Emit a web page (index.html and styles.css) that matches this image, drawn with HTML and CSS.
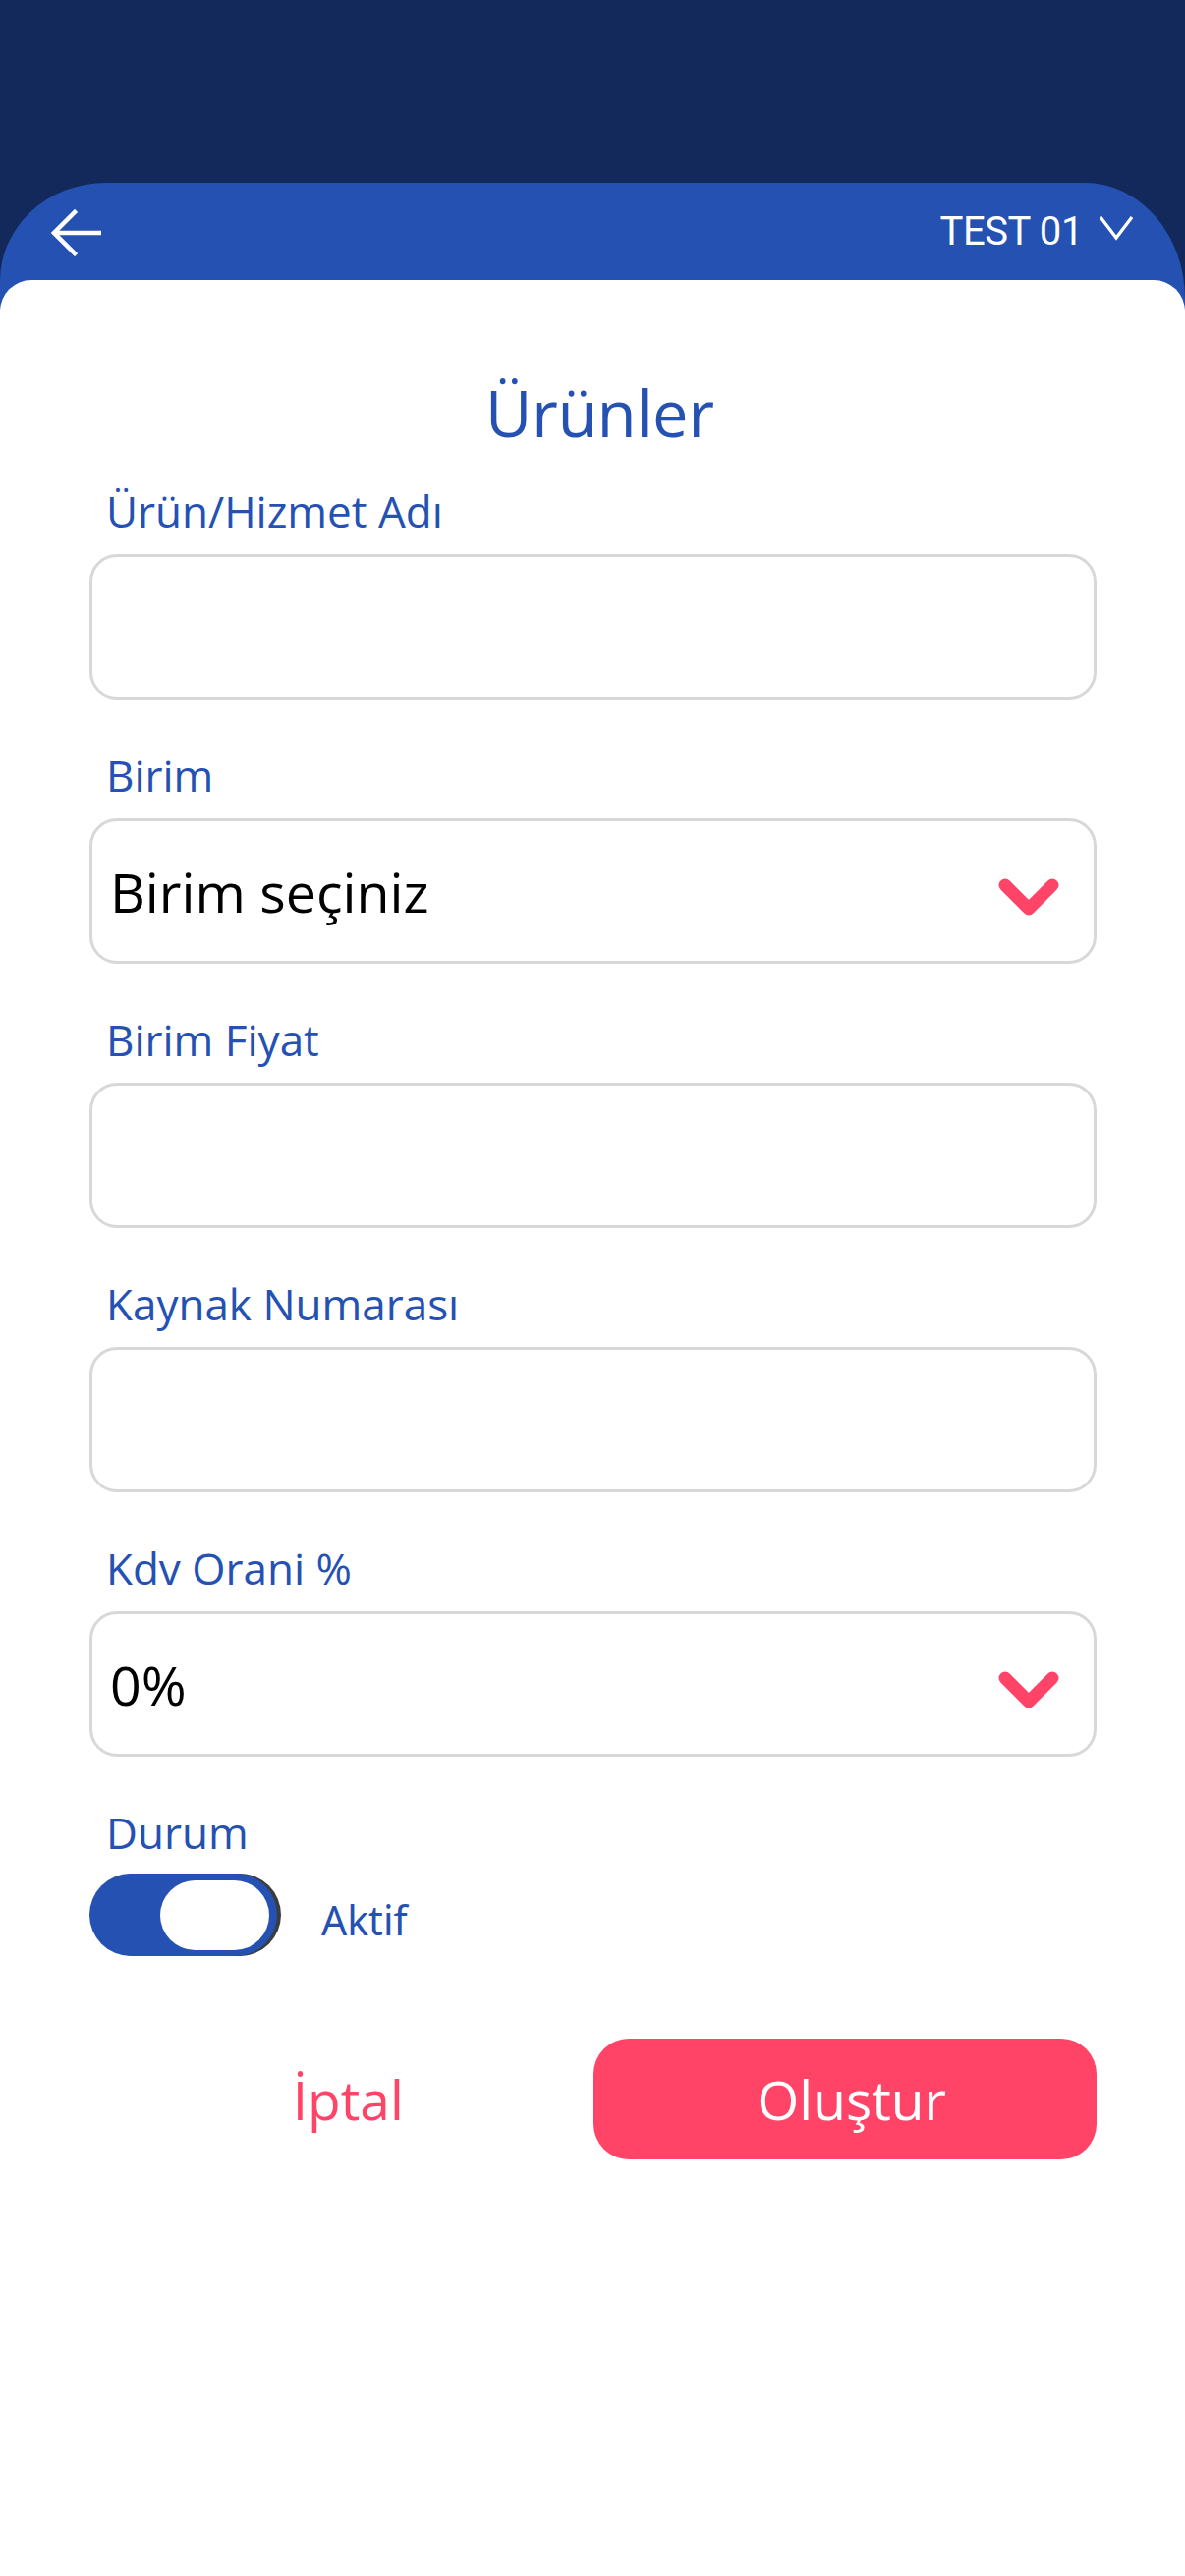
FILE: index.html
```html
<!DOCTYPE html>
<html lang="tr">
<head>
<meta charset="utf-8">
<title>Ürünler</title>
<link rel="stylesheet" href="styles.css">
</head>
<body>
<div class="screen">
  <div class="statusbar"></div>
  <div class="panel">
    <header class="topbar">
      <svg class="back" width="51" height="48" viewBox="0 0 51 48" aria-hidden="true">
        <path d="M49 24 H4 M24 3 L3 24 L24 45" fill="none" stroke="#fff" stroke-width="4.5" stroke-linecap="square" stroke-linejoin="miter"/>
      </svg>
      <div class="company">
        <span class="company-name">TEST 01</span>
        <svg class="company-caret" width="36" height="26" viewBox="0 0 36 26" aria-hidden="true">
          <path d="M2 2 L18 23 L34 2" fill="none" stroke="#fff" stroke-width="3.2"/>
        </svg>
      </div>
    </header>
    <main class="card">
      <h1 class="title">Ürünler</h1>
      <div class="field">
        <label class="label">Ürün/Hizmet Adı</label>
        <div class="box"></div>
      </div>
      <div class="field">
        <label class="label">Birim</label>
        <div class="box select">
          <span class="value">Birim seçiniz</span>
          <svg class="caret" width="64" height="42" viewBox="0 0 64 42" aria-hidden="true">
            <path d="M8 8 L32 32 L56 8" fill="none" stroke="#ff4468" stroke-width="13" stroke-linecap="round" stroke-linejoin="round"/>
          </svg>
        </div>
      </div>
      <div class="field">
        <label class="label">Birim Fiyat</label>
        <div class="box"></div>
      </div>
      <div class="field">
        <label class="label">Kaynak Numarası</label>
        <div class="box"></div>
      </div>
      <div class="field">
        <label class="label">Kdv Orani %</label>
        <div class="box select">
          <span class="value">0%</span>
          <svg class="caret" width="64" height="42" viewBox="0 0 64 42" aria-hidden="true">
            <path d="M8 8 L32 32 L56 8" fill="none" stroke="#ff4468" stroke-width="13" stroke-linecap="round" stroke-linejoin="round"/>
          </svg>
        </div>
      </div>
      <div class="field status">
        <label class="label">Durum</label>
        <div class="toggle-row">
          <div class="toggle"><div class="thumb"></div></div>
          <span class="toggle-text">Aktif</span>
        </div>
      </div>
      <div class="actions">
        <button class="btn btn-cancel">İptal</button>
        <button class="btn btn-primary">Oluştur</button>
      </div>
    </main>
  </div>
</div>
</body>
</html>
```
FILE: styles.css
```css
* { box-sizing: border-box; }
html, body {
  margin: 0;
  padding: 0;
  width: 1206px;
  height: 2622px;
  overflow: hidden;
  background: #14295b;
  font-family: "Open Sans", "Noto Sans", sans-serif;
}
.screen {
  display: flex;
  flex-direction: column;
  height: 2622px;
}
.statusbar {
  height: 186px;
  flex: none;
  background: #14295b;
}
.panel {
  flex: 1;
  display: flex;
  flex-direction: column;
  background: #2451b2;
  border-radius: 108px 102px 0 0 / 100px 118px 0 0;
}
.topbar {
  height: 99px;
  flex: none;
  display: flex;
  align-items: center;
  justify-content: space-between;
  padding: 0 52px 0 52px;
}
.back { display: block; margin-top: 2px; }
.company {
  display: flex;
  align-items: center;
  gap: 16px;
}
.company-name {
  font-family: Roboto, "Liberation Sans", sans-serif;
  font-size: 40px;
  letter-spacing: -0.4px;
  color: #fff;
  line-height: 1;
}
.company-caret { display: block; margin-top: -8px; }
.card {
  flex: 1;
  background: #fff;
  border-radius: 32px 32px 0 0;
  padding: 95px 90px 0 91px;
}
.title {
  margin: 0 0 32px;
  padding-left: 14px;
  text-align: center;
  font-weight: 400;
  font-size: 65px;
  line-height: 80px;
  color: #2451b2;
}
.field { margin-bottom: 49px; }
.label {
  display: block;
  padding-left: 17px;
  font-size: 44px;
  line-height: 57px;
  color: #2451b2;
  margin-bottom: 15px;
}
.box {
  height: 148px;
  border: 3px solid #d8d8d8;
  border-radius: 28px;
  display: flex;
  align-items: center;
}
.select {
  justify-content: space-between;
  padding: 0 34px 0 18px;
}
.value {
  font-size: 55.5px;
  color: #000;
}
.caret { display: block; margin-top: 14px; }
.status { margin-bottom: 84px; }
.status .label { margin-bottom: 13px; }
.toggle-row {
  display: flex;
  align-items: center;
  gap: 45px;
}
.toggle {
  width: 191px;
  height: 84px;
  border-radius: 42px;
  background: #2451b2;
  box-shadow: 4px 0 0 #3c3c3c;
  display: flex;
  align-items: center;
  justify-content: flex-end;
  padding-right: 8px;
}
.thumb {
  width: 111px;
  height: 71px;
  border-radius: 36px;
  background: #fff;
}
.toggle-text {
  font-family: "Noto Sans", "Open Sans", sans-serif;
  font-size: 41px;
  color: #2451b2;
  margin-top: 10px;
}
.actions {
  display: flex;
  height: 123px;
}
.btn {
  flex: 1;
  border: none;
  font-family: "Open Sans", sans-serif;
  font-size: 55px;
  font-weight: 400;
  height: 123px;
  padding: 0 0 0 14px;
}
.btn-cancel {
  background: transparent;
  color: #ff4468;
}
.btn-primary {
  background: #ff4468;
  color: #fff;
  border-radius: 36px;
}
```
